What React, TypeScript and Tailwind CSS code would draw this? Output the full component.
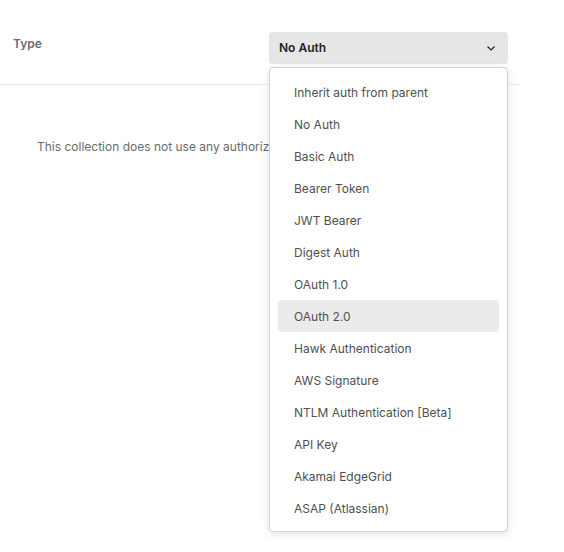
import React from "react";

const items = [
  "Inherit auth from parent",
  "No Auth",
  "Basic Auth",
  "Bearer Token",
  "JWT Bearer",
  "Digest Auth",
  "OAuth 1.0",
  "OAuth 2.0",
  "Hawk Authentication",
  "AWS Signature",
  "NTLM Authentication [Beta]",
  "API Key",
  "Akamai EdgeGrid",
  "ASAP (Atlassian)",
];

export default function App() {
  return (
    <div className="relative w-[564px] h-[552px] bg-white overflow-hidden font-['Inter','Liberation_Sans',sans-serif] text-[12px]">
      <div className="w-[521px] h-[85px] border-b border-[#ededed] flex items-start">
        <div className="pl-[13px] pt-[36px] font-semibold text-[#6b6b6b] leading-[16px] w-[269px]">Type</div>
        <div className="mt-[32px] w-[239px] h-[32px] rounded-[4px] bg-[#e6e6e6] flex items-center pl-[10px] pr-[12px]">
          <span className="font-semibold text-[#212121] leading-[16px]">No Auth</span>
          <svg className="ml-auto" width="10" height="10" viewBox="0 0 10 10" fill="none">
            <path d="M1.5 3.5 L5 7 L8.5 3.5" stroke="#212121" strokeWidth="1.2" />
          </svg>
        </div>
      </div>
      <div className="w-[269px] overflow-hidden pl-[37px] pt-[54px]">
        <p className="text-[#6b6b6b] leading-[16px] whitespace-nowrap">
          This collection does not use any authorization.
        </p>
      </div>
      <div className="absolute left-[269px] top-[67px] w-[239px] bg-white border border-[#d4d4d4] rounded-[4px] shadow-[0_2px_8px_rgba(0,0,0,0.12)] px-[8px] pt-[8px] pb-[7px]">
        {items.map((it) => (
          <div
            key={it}
            className={`h-[32px] flex items-center pl-[16px] pt-[2px] rounded-[4px] text-[#505050] ${it === "OAuth 2.0" ? "bg-[#ebebeb]" : ""}`}
          >
            {it}
          </div>
        ))}
      </div>
    </div>
  );
}
